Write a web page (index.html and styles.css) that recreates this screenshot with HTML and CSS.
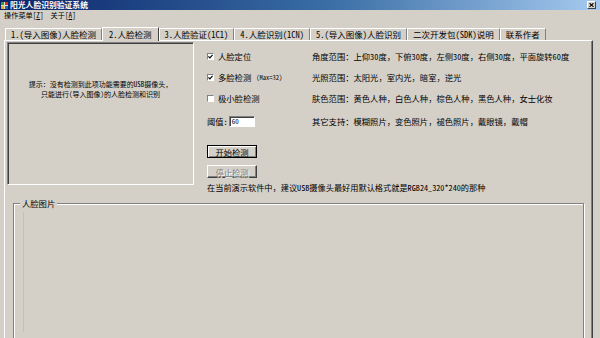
FILE: index.html
```html
<html>
    <head>
        <title>阳光人脸识别验证系统</title>
        <meta charset="utf-8">
        <link rel="stylesheet" href="styles.css">
    </head>
    <body>
        <div class="window">
            <div class="titlebar">
                <svg class="app-icon" width="7" height="7" viewBox="0 0 7 7">
                    <rect x="0" y="0" width="7" height="7" fill="#e8e0c0"/>
                    <rect x="0" y="0" width="3" height="3" fill="#3a9a3a"/>
                    <rect x="4" y="0" width="3" height="3" fill="#d03030"/>
                    <rect x="0" y="4" width="3" height="3" fill="#e0b020"/>
                    <rect x="4" y="4" width="3" height="3" fill="#3060c0"/>
                </svg>
                <span class="title">阳光人脸识别验证系统</span>
                <span class="close">
                    <svg width="5" height="4" viewBox="0 0 5 4">
                        <path d="M0.5 0.2 L4.5 3.8 M4.5 0.2 L0.5 3.8" stroke="#000" stroke-width="1.1"/>
                    </svg>
                </span>
            </div>
            <div class="menubar">
                <span>操作菜单[<u>Z</u>]</span>
                <span>关于[<u>A</u>]</span>
            </div>
            <div class="client">
                <div class="tabs">
                    <span class="tab">1.(导入图像)人脸检测</span>
                    <span class="tab active">2.人脸检测</span>
                    <span class="tab">3.人脸验证(1C1)</span>
                    <span class="tab">4.人脸识别(1CN)</span>
                    <span class="tab">5.(导入图像)人脸识别</span>
                    <span class="tab">二次开发包(SDK)说明</span>
                    <span class="tab">联系作者</span>
                </div>
                <div class="panel">
                    <div class="top">
                        <div class="preview">
                            <p>提示：没有检测到此项功能需要的USB摄像头，<br>只能进行(导入图像)的人脸检测和识别</p>
                        </div>
                        <div class="settings">
                            <div class="options">
                                <label class="option">
                                    <span class="checkbox"><svg width="5" height="5" viewBox="0 0 5 5"><path d="M0.4 2.4 L1.9 3.9 L4.6 0.8" fill="none" stroke="#000" stroke-width="1.2"/></svg></span>
                                    人脸定位
                                </label>
                                <span class="info">角度范围：上仰30度，下俯30度，左侧30度，右侧30度，平面旋转60度</span>
                                <label class="option">
                                    <span class="checkbox"><svg width="5" height="5" viewBox="0 0 5 5"><path d="M0.4 2.4 L1.9 3.9 L4.6 0.8" fill="none" stroke="#000" stroke-width="1.2"/></svg></span>
                                    多脸检测<span class="small">(Max=32)</span>
                                </label>
                                <span class="info">光照范围：太阳光，室内光，暗室，逆光</span>
                                <label class="option">
                                    <span class="checkbox"></span>
                                    极小脸检测
                                </label>
                                <span class="info">肤色范围：黄色人种，白色人种，棕色人种，黑色人种，女士化妆</span>
                                <label class="option field">
                                    阈值:<span class="edit">60</span>
                                </label>
                                <span class="info">其它支持：模糊照片，变色照片，褪色照片，戴眼镜，戴帽</span>
                            </div>
                            <button class="btn default">开始检测</button>
                            <button class="btn second" disabled>停止检测</button>
                            <p class="note">在当前演示软件中，建议USB摄像头最好用默认格式就是RGB24_320*240的那种</p>
                        </div>
                    </div>
                    <fieldset class="group">
                        <legend>人脸图片</legend>
                        <div class="face"></div>
                    </fieldset>
                </div>
            </div>
        </div>
    </body>
</html>
```

FILE: styles.css
```css
body{
    margin: 0;
    background-color: #d4d0c8;
    color: #000;
    font-family: "Noto Sans Mono CJK SC", "Noto Sans CJK SC", sans-serif;
    cursor: default;
}
.window{
    width: 600px;
    height: 338px;
    overflow: hidden;
}
.titlebar{
    height: 10px;
    display: flex;
    align-items: center;
    padding: 0 4px 0 1px;
    background: linear-gradient(to right, #0a246a, #3a6ea5 55%, #a6caf0);
}
.title{
    flex: 1;
    margin-left: 2px;
    color: #fff;
    font-weight: bold;
    font-size: 7.8px;
    line-height: 10px;
    white-space: nowrap;
}
.close{
    width: 9px;
    height: 8px;
    box-sizing: border-box;
    display: flex;
    align-items: center;
    justify-content: center;
    background-color: #d4d0c8;
    border: 1px solid;
    border-color: #fff #404040 #404040 #fff;
}
.menubar{
    height: 11px;
    display: flex;
    gap: 7px;
    padding-left: 4px;
    font-size: 7.2px;
    line-height: 11px;
}
.client{
    padding: 0 7px 0 4px;
}
.tabs{
    position: relative;
    z-index: 1;
    height: 19px;
    display: flex;
    align-items: flex-end;
    padding-left: 1px;
}
.tab{
    height: 12px;
    box-sizing: border-box;
    padding: 0 5px;
    font-size: 8.5px;
    line-height: 11px;
    white-space: nowrap;
    border-top: 1px solid #fff;
    border-left: 1px solid #fff;
    border-right: 1px solid #808080;
}
.tab.active{
    height: 14px;
    margin-bottom: -1px;
    padding: 0 6px;
    line-height: 12px;
    background-color: #d4d0c8;
    border-right-color: #404040;
}
.panel{
    height: 298px;
    box-sizing: border-box;
    border-top: 1px solid #fff;
    border-left: 1px solid #fff;
    border-right: 1px solid #404040;
    box-shadow: inset -1px 0 #808080;
}
.top{
    display: flex;
    align-items: flex-start;
}
.preview{
    width: 187px;
    height: 143px;
    margin: 1px 0 0 2px;
    box-sizing: border-box;
    padding-top: 36px;
    border: 1px solid;
    border-color: #808080 #fff #fff #808080;
    box-shadow: inset 1px 1px #404040;
    text-align: center;
    font-size: 7px;
    line-height: 10px;
}
.preview p{
    margin: 0;
}
.settings{
    margin-left: 13px;
    padding-top: 9px;
    font-size: 8.3px;
}
.options{
    display: grid;
    grid-template-columns: 105px auto;
    grid-template-rows: 12px 12px 12px 16px;
    row-gap: 9px;
    align-items: center;
}
.option{
    display: flex;
    align-items: center;
    gap: 4px;
    white-space: nowrap;
}
.field{
    gap: 1px;
}
.checkbox{
    width: 7px;
    height: 7px;
    box-sizing: border-box;
    display: flex;
    align-items: center;
    justify-content: center;
    background-color: #fff;
    border: 1px solid;
    border-color: #808080 #fff #fff #808080;
}
.small{
    font-size: 6.5px;
    margin-left: 1px;
}
.info{
    white-space: nowrap;
}
.edit{
    width: 26px;
    height: 11px;
    box-sizing: border-box;
    padding: 0 2px;
    background-color: #fff;
    border: 1px solid;
    border-color: #808080 #fff #fff #808080;
    box-shadow: inset 1px 1px #404040;
    font-size: 7px;
    line-height: 9px;
}
.btn{
    display: block;
    width: 50px;
    height: 13px;
    margin-top: 16px;
    padding: 0;
    box-sizing: border-box;
    font-family: inherit;
    font-size: 8.3px;
    line-height: 10px;
    color: #000;
    background-color: #d4d0c8;
    border: 1px solid;
    border-color: #fff #404040 #404040 #fff;
    box-shadow: inset -1px -1px #808080;
}
.btn.default{
    border-color: #000;
    box-shadow: inset 1px 1px #fff, inset -1px -1px #808080;
}
.btn.second{
    margin-top: 7px;
}
.btn:disabled{
    color: #808080;
    text-shadow: 1px 1px #fff;
}
.note{
    margin: 4px 0 0;
    font-size: 8.2px;
    line-height: 10px;
    white-space: nowrap;
}
.group{
    height: 150px;
    margin: 6px 8px 0 8px;
    padding: 0;
    border: 1px solid #808080;
    box-shadow: inset 1px 1px #fff, 1px 1px #fff;
}
.group legend{
    margin-left: 6px;
    padding: 0 2px;
    font-size: 8.3px;
    line-height: 10px;
    background-color: #d4d0c8;
}
.face{
    height: 120px;
    margin: 4px 9px 0 9px;
    border-left: 1px solid #c4c0b8;
}
```
